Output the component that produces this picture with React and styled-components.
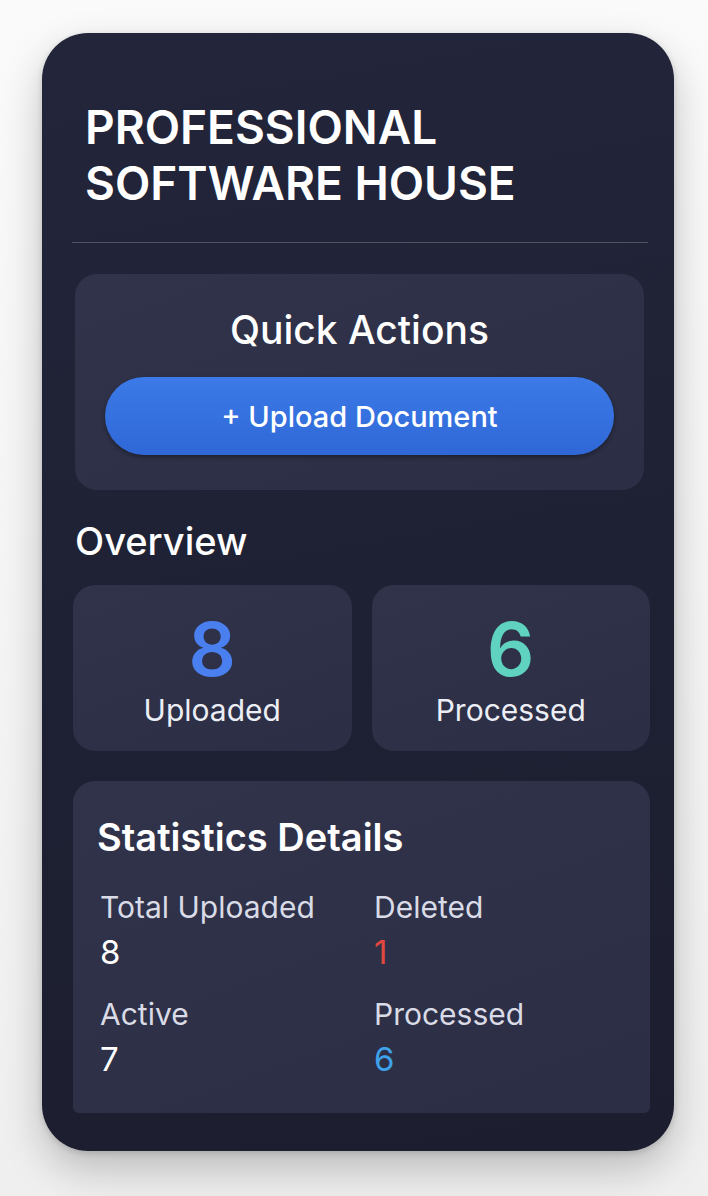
import React from 'react';
import styled, { createGlobalStyle } from 'styled-components';

const GlobalStyle = createGlobalStyle`
  html, body {
    margin: 0;
    padding: 0;
    background: #f4f4f5;
    font-family: Inter, "Noto Sans", "Liberation Sans", sans-serif;
  }
  * { box-sizing: border-box; }
`;

const Page = styled.div`
  min-height: 1196px;
  padding: 33px 34px 0 42px;
  background: linear-gradient(180deg, #fafafa 0%, #efeff0 100%);
`;

const Card = styled.div`
  width: 632px;
  border-radius: 46px;
  background: linear-gradient(170deg, #23263b 0%, #1e2133 55%, #1c1e2f 100%);
  box-shadow: 0 18px 40px rgba(0, 0, 0, 0.22), 0 2px 6px rgba(0, 0, 0, 0.15);
  padding: 66px 24px 38px 31px;
  display: flex;
  flex-direction: column;
  color: #fff;
`;

const Title = styled.h1`
  margin: 0 0 31px 12px;
  font-size: 46px;
  line-height: 56px;
  font-weight: 600;
  letter-spacing: 0;
  text-transform: uppercase;
`;

const Divider = styled.hr`
  border: none;
  height: 1px;
  background: rgba(255, 255, 255, 0.22);
  margin: 0 2px 31px -1px;
`;

const Panel = styled.section`
  background: linear-gradient(160deg, #30334a 0%, #2b2e44 100%);
  border-radius: ${p => p.$bottomFlat ? '22px 22px 6px 6px' : '22px'};
  padding: ${p => p.$pad};
  margin: ${p => p.$margin || 0};
`;

const PanelTitle = styled.h2`
  margin: 0;
  font-size: ${p => p.$size || 39}px;
  line-height: 44px;
  font-weight: ${p => p.$weight || 500};
  text-align: ${p => p.$center ? 'center' : 'left'};
`;

const UploadButton = styled.button`
  display: block;
  width: 100%;
  height: 78px;
  margin-top: 25px;
  border: none;
  border-radius: 39px;
  background: linear-gradient(180deg, #3b7ae8 0%, #2f68d6 100%);
  box-shadow: 0 2px 4px rgba(0, 0, 0, 0.35);
  color: #fff;
  font-family: inherit;
  font-size: 29px;
  font-weight: 500;
  cursor: pointer;
`;

const SectionHeading = styled.h2`
  margin: 29px 0 22px 2px;
  font-size: 38px;
  line-height: 44px;
  font-weight: 500;
`;

const StatRow = styled.div`
  display: grid;
  grid-template-columns: 1fr 1fr;
  gap: 20px;
`;

const StatCard = styled.div`
  background: linear-gradient(160deg, #30334a 0%, #2b2e44 100%);
  border-radius: 22px;
  height: 166px;
  padding-top: 27px;
  display: flex;
  flex-direction: column;
  align-items: center;
`;

const BigNumber = styled.div`
  font-size: 74px;
  line-height: 74px;
  font-weight: 600;
  color: ${p => p.$color};
`;

const StatLabel = styled.div`
  margin-top: 7px;
  font-size: 30px;
  line-height: 34px;
  color: #eceef5;
`;

const DetailGrid = styled.div`
  display: grid;
  grid-template-columns: 274px 1fr;
  row-gap: 26px;
  margin-top: 31px;
  padding-left: 3px;
`;

const DetailItem = styled.div`
  display: flex;
  flex-direction: column;
  gap: 9px;
`;

const DetailLabel = styled.div`
  font-size: 30px;
  line-height: 34px;
  color: #d9dbe6;
`;

const DetailValue = styled.div`
  font-size: 33px;
  line-height: 38px;
  color: ${p => p.$color || '#ffffff'};
`;

const details = [
  { label: 'Total Uploaded', value: 8 },
  { label: 'Deleted', value: 1, color: '#e0483f' },
  { label: 'Active', value: 7 },
  { label: 'Processed', value: 6, color: '#3ea2ea' },
];

export default function App() {
  return (
    <Page>
      <GlobalStyle />
      <Card>
        <Title>Professional<br />Software House</Title>
        <Divider />
        <Panel $pad="34px 30px 35px 30px" $margin="0 6px 0 2px">
          <PanelTitle $center>Quick Actions</PanelTitle>
          <UploadButton>+ Upload Document</UploadButton>
        </Panel>
        <SectionHeading>Overview</SectionHeading>
        <StatRow>
          <StatCard>
            <BigNumber $color="#4a7ff0">8</BigNumber>
            <StatLabel>Uploaded</StatLabel>
          </StatCard>
          <StatCard>
            <BigNumber $color="#5fd3bf">6</BigNumber>
            <StatLabel>Processed</StatLabel>
          </StatCard>
        </StatRow>
        <Panel $bottomFlat $pad="34px 24px 35px 24px" $margin="30px 0 0 0">
          <PanelTitle $size={38} $weight={600}>Statistics Details</PanelTitle>
          <DetailGrid>
            {details.map(d => (
              <DetailItem key={d.label}>
                <DetailLabel>{d.label}</DetailLabel>
                <DetailValue $color={d.color}>{d.value}</DetailValue>
              </DetailItem>
            ))}
          </DetailGrid>
        </Panel>
      </Card>
    </Page>
  );
}
